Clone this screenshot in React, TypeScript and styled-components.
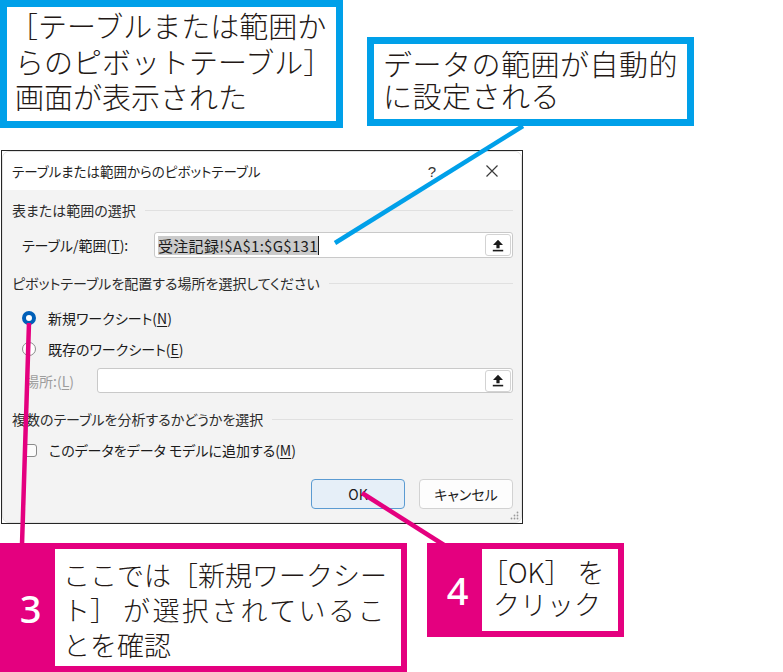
import React from "react";
import styled, { createGlobalStyle } from "styled-components";

const JP = `"Noto Sans CJK JP", "Noto Sans", sans-serif`;

const Global = createGlobalStyle`
  html, body { margin: 0; padding: 0; background: #ffffff; }
  body { font-family: ${JP}; }
`;

const Page = styled.div`
  position: relative;
  width: 783px;
  height: 672px;
  overflow: hidden;
  background: #ffffff;
  font-family: ${JP};
`;

const TopRow = styled.div`
  display: flex;
  align-items: flex-start;
  height: 150px;
`;

const InfoCallout = styled.div<{
  $w: number;
  $h: number;
  $mt?: number;
  $ml?: number;
  $fs: number;
  $lh: number;
  $pt: number;
  $pl: number;
  $ls?: number;
}>`
  box-sizing: border-box;
  width: ${(p) => p.$w}px;
  height: ${(p) => p.$h}px;
  margin-top: ${(p) => p.$mt ?? 0}px;
  margin-left: ${(p) => p.$ml ?? 0}px;
  border: 7px solid #00a0e9;
  background: #ffffff;
  padding: ${(p) => p.$pt}px 0 0 ${(p) => p.$pl}px;
  font-size: ${(p) => p.$fs}px;
  font-weight: 300;
  line-height: ${(p) => p.$lh}px;
  letter-spacing: ${(p) => p.$ls ?? 0}px;
  color: #231815;
  white-space: nowrap;
`;

const Bracket = styled.span<{ $ml?: number; $mr?: number }>`
  display: inline-block;
  margin-left: ${(p) => p.$ml ?? 0}px;
  margin-right: ${(p) => p.$mr ?? 0}px;
`;

const Spaced = styled.span<{ $ls: number; $ml?: number }>`
  letter-spacing: ${(p) => p.$ls}px;
  margin-left: ${(p) => p.$ml ?? 0}px;
`;

/* ---------- dialog ---------- */

const DialogFrame = styled.div`
  box-sizing: border-box;
  width: 522px;
  height: 374px;
  margin-left: 1px;
  border: 1px solid #262626;
  background: #ffffff;
  display: flex;
`;

const Window = styled.div`
  position: relative;
  flex: 1;
  display: flex;
  flex-direction: column;
  border: 1px solid #e2e2e2;
  border-radius: 7px;
  overflow: hidden;
  background: #f3f3f3;
  color: #1b1b1b;
  font-family: ${JP};
  font-feature-settings: "palt";
`;

const TitleBar = styled.div`
  height: 38px;
  flex: none;
  display: flex;
  align-items: center;
  background: #ffffff;
  padding-left: 9px;
  font-size: 13.5px;
  color: #1f1f1f;
`;

const TitleText = styled.div`
  flex: 1;
`;

const TitleButton = styled.div<{ $w: number; $mr?: number; $ml?: number }>`
  width: ${(p) => p.$w}px;
  margin-right: ${(p) => p.$mr ?? 0}px;
  margin-left: ${(p) => p.$ml ?? 0}px;
  height: 38px;
  display: flex;
  align-items: center;
  justify-content: center;
  font-family: "Liberation Sans", sans-serif;
  font-size: 15px;
  color: #333333;
`;

const Body = styled.div`
  flex: 1;
  display: flex;
  flex-direction: column;
  padding: 10px 8px 0 9px;
`;

const GroupHeader = styled.div<{ $mt?: number }>`
  margin-top: ${(p) => p.$mt ?? 0}px;
  height: 20px;
  display: flex;
  align-items: center;
  font-size: 14px;
  color: #2b2b2b;
  white-space: nowrap;
`;

const HeaderRule = styled.div`
  flex: 1;
  height: 1px;
  margin-left: 9px;
  background: #e0e0e0;
`;

const FieldRow = styled.div<{ $mt: number; $h: number }>`
  margin-top: ${(p) => p.$mt}px;
  height: ${(p) => p.$h}px;
  display: flex;
  align-items: center;
  font-size: 14px;
  white-space: nowrap;
`;

const FieldLabel = styled.div<{ $w: number; $pl: number; $disabled?: boolean }>`
  box-sizing: border-box;
  width: ${(p) => p.$w}px;
  padding-left: ${(p) => p.$pl}px;
  color: ${(p) => (p.$disabled ? "#9d9d9d" : "#1b1b1b")};
`;

const TextBox = styled.div`
  flex: 1;
  box-sizing: border-box;
  height: 100%;
  display: flex;
  align-items: center;
  padding-left: 3px;
  border: 1px solid #c9c9c9;
  border-radius: 3px;
  background: #ffffff;
`;

const Selected = styled.span`
  background: #cbcbcb;
  font-size: 15px;
  line-height: 19px;
  letter-spacing: 0.3px;
  color: #1b1b1b;
  font-feature-settings: normal;
`;

const Caret = styled.span`
  width: 1px;
  height: 19px;
  background: #1b1b1b;
`;

const PickButton = styled.div`
  box-sizing: border-box;
  margin-left: auto;
  margin-right: 1px;
  width: 26px;
  height: 22px;
  display: flex;
  align-items: center;
  justify-content: center;
  border: 1px solid #d3d3d3;
  border-radius: 3px;
  background: #ffffff;
`;

const OptionRow = styled.div<{ $mt: number; $pl: number }>`
  margin-top: ${(p) => p.$mt}px;
  height: 20px;
  display: flex;
  align-items: center;
  gap: 12px;
  padding-left: ${(p) => p.$pl}px;
  font-size: 14px;
  white-space: nowrap;
`;

const Radio = styled.span<{ $checked?: boolean }>`
  box-sizing: border-box;
  width: 14px;
  height: 14px;
  border-radius: 50%;
  background: #ffffff;
  border: ${(p) => (p.$checked ? "4px solid #005fb8" : "1px solid #8a8a8a")};
`;

const CheckBox = styled.span`
  box-sizing: border-box;
  width: 13px;
  height: 13px;
  border-radius: 3px;
  border: 1px solid #8a8a8a;
  background: #fbfbfb;
`;

const Key = styled.span`
  text-decoration: underline;
  text-underline-offset: 2px;
`;

const ButtonRow = styled.div`
  margin-top: 19px;
  height: 30px;
  display: flex;
  justify-content: flex-end;
  gap: 14px;
`;

const DialogButton = styled.div<{ $primary?: boolean }>`
  box-sizing: border-box;
  width: 94px;
  height: 30px;
  display: flex;
  align-items: center;
  justify-content: center;
  border-radius: 4px;
  font-size: 14px;
  color: #1b1b1b;
  background: ${(p) => (p.$primary ? "#e6eff8" : "#fdfdfd")};
  border: 1px solid ${(p) => (p.$primary ? "#5b9bd2" : "#d2d2d2")};
`;

const Grip = styled.svg`
  position: absolute;
  right: 2px;
  bottom: 2px;
`;

/* ---------- step callouts ---------- */

const BottomRow = styled.div`
  display: flex;
  align-items: flex-start;
  margin-top: 19px;
`;

const StepCallout = styled.div<{ $w: number; $h: number; $ml?: number }>`
  box-sizing: border-box;
  width: ${(p) => p.$w}px;
  height: ${(p) => p.$h}px;
  margin-left: ${(p) => p.$ml ?? 0}px;
  border: 6px solid #e4007f;
  display: flex;
  background: #e4007f;
`;

const StepNumber = styled.div`
  width: 49px;
  flex: none;
  display: flex;
  align-items: center;
  justify-content: center;
  color: #ffffff;
  font-family: "Noto Sans", "Noto Sans CJK JP", sans-serif;
  font-size: 38px;
  font-weight: 500;
`;

const StepText = styled.div<{ $lh: number; $pt: number; $pl: number }>`
  flex: 1;
  background: #ffffff;
  padding: ${(p) => p.$pt}px 0 0 ${(p) => p.$pl}px;
  font-size: 27px;
  font-weight: 300;
  line-height: ${(p) => p.$lh}px;
  color: #231815;
  white-space: nowrap;
  overflow: hidden;
`;

const Overlay = styled.svg`
  position: absolute;
  left: 0;
  top: 0;
  pointer-events: none;
`;

function UploadIcon() {
  return (
    <svg width="12" height="13" viewBox="0 0 12 13">
      <path d="M6 0.8 L11 6 H7.6 V9.3 H4.4 V6 H1 Z" fill="#1b1b1b" />
      <rect x="0.8" y="10.8" width="10.4" height="1.6" fill="#1b1b1b" />
    </svg>
  );
}

function CloseIcon() {
  return (
    <svg width="14" height="14" viewBox="0 0 14 14">
      <path d="M1.5 1.5 L12.5 12.5 M12.5 1.5 L1.5 12.5" stroke="#3a3a3a" strokeWidth="1.2" fill="none" />
    </svg>
  );
}

export default function App() {
  return (
    <Page>
      <Global />
      <TopRow>
        <InfoCallout $w={343} $h={128} $fs={29} $lh={35.5} $pt={1} $pl={8}>
          <Bracket $ml={-6}>［</Bracket>テーブルまたは範囲か
          <br />
          らのピボットテーブル］
          <br />
          画面が表示された
        </InfoCallout>
        <InfoCallout $w={327} $h={89} $mt={37} $ml={24} $fs={29} $lh={32} $pt={3} $pl={9} $ls={0.5}>
          データの範囲が自動的
          <br />
          に設定される
        </InfoCallout>
      </TopRow>

      <DialogFrame>
        <Window>
          <TitleBar>
            <TitleText>テーブルまたは範囲からのピボットテーブル</TitleText>
            <TitleButton $w={30}>?</TitleButton>
            <TitleButton $w={44} $mr={7} $ml={23}>
              <CloseIcon />
            </TitleButton>
          </TitleBar>
          <Body>
            <GroupHeader>
              表または範囲の選択
              <HeaderRule />
            </GroupHeader>
            <FieldRow $mt={12} $h={26}>
              <FieldLabel $w={142} $pl={10}>
                テーブル/範囲(<Key>T</Key>):
              </FieldLabel>
              <TextBox>
                <Selected>受注記録!$A$1:$G$131</Selected>
                <Caret />
                <PickButton>
                  <UploadIcon />
                </PickButton>
              </TextBox>
            </FieldRow>

            <GroupHeader $mt={15}>
              ピボットテーブルを配置する場所を選択してください
              <HeaderRule />
            </GroupHeader>
            <OptionRow $mt={15} $pl={10}>
              <Radio $checked />
              <span>
                新規ワークシート(<Key>N</Key>)
              </span>
            </OptionRow>
            <OptionRow $mt={11} $pl={10}>
              <Radio />
              <span>
                既存のワークシート(<Key>E</Key>)
              </span>
            </OptionRow>
            <FieldRow $mt={9} $h={25}>
              <FieldLabel $w={85} $pl={13} $disabled>
                場所:(<Key>L</Key>)
              </FieldLabel>
              <TextBox>
                <PickButton>
                  <UploadIcon />
                </PickButton>
              </TextBox>
            </FieldRow>

            <GroupHeader $mt={16}>
              複数のテーブルを分析するかどうかを選択
              <HeaderRule />
            </GroupHeader>
            <OptionRow $mt={11} $pl={12}>
              <CheckBox />
              <span>
                このデータをデータ モデルに追加する(<Key>M</Key>)
              </span>
            </OptionRow>

            <ButtonRow>
              <DialogButton $primary>OK</DialogButton>
              <DialogButton>キャンセル</DialogButton>
            </ButtonRow>
          </Body>
          <Grip width="10" height="10" viewBox="0 0 10 10">
            <circle cx="8.5" cy="2.5" r="0.9" fill="#9a9a9a" />
            <circle cx="5.5" cy="5.5" r="0.9" fill="#9a9a9a" />
            <circle cx="8.5" cy="5.5" r="0.9" fill="#9a9a9a" />
            <circle cx="2.5" cy="8.5" r="0.9" fill="#9a9a9a" />
            <circle cx="5.5" cy="8.5" r="0.9" fill="#9a9a9a" />
            <circle cx="8.5" cy="8.5" r="0.9" fill="#9a9a9a" />
          </Grip>
        </Window>
      </DialogFrame>

      <BottomRow>
        <StepCallout $w={407} $h={129}>
          <StepNumber>3</StepNumber>
          <StepText $lh={35} $pt={8} $pl={8}>
            ここでは<Bracket>［</Bracket>新規ワークシー
            <br />
            ト<Bracket>］</Bracket>
            <Spaced $ls={2.4} $ml={6}>が選択されているこ</Spaced>
            <br />
            とを確認
          </StepText>
        </StepCallout>
        <StepCallout $w={197} $h={94} $ml={20}>
          <StepNumber>4</StepNumber>
          <StepText $lh={32} $pt={7} $pl={11}>
            <Bracket $ml={-12}>［</Bracket>OK］ を
            <br />
            クリック
          </StepText>
        </StepCallout>
      </BottomRow>

      <Overlay width="783" height="672" viewBox="0 0 783 672">
        <line x1="523" y1="126" x2="335" y2="243" stroke="#00a0e9" strokeWidth="4.5" />
        <line x1="29" y1="323" x2="22" y2="545" stroke="#e4007f" strokeWidth="4.5" />
        <line x1="362" y1="493" x2="444" y2="545" stroke="#e4007f" strokeWidth="4.5" />
      </Overlay>
    </Page>
  );
}
